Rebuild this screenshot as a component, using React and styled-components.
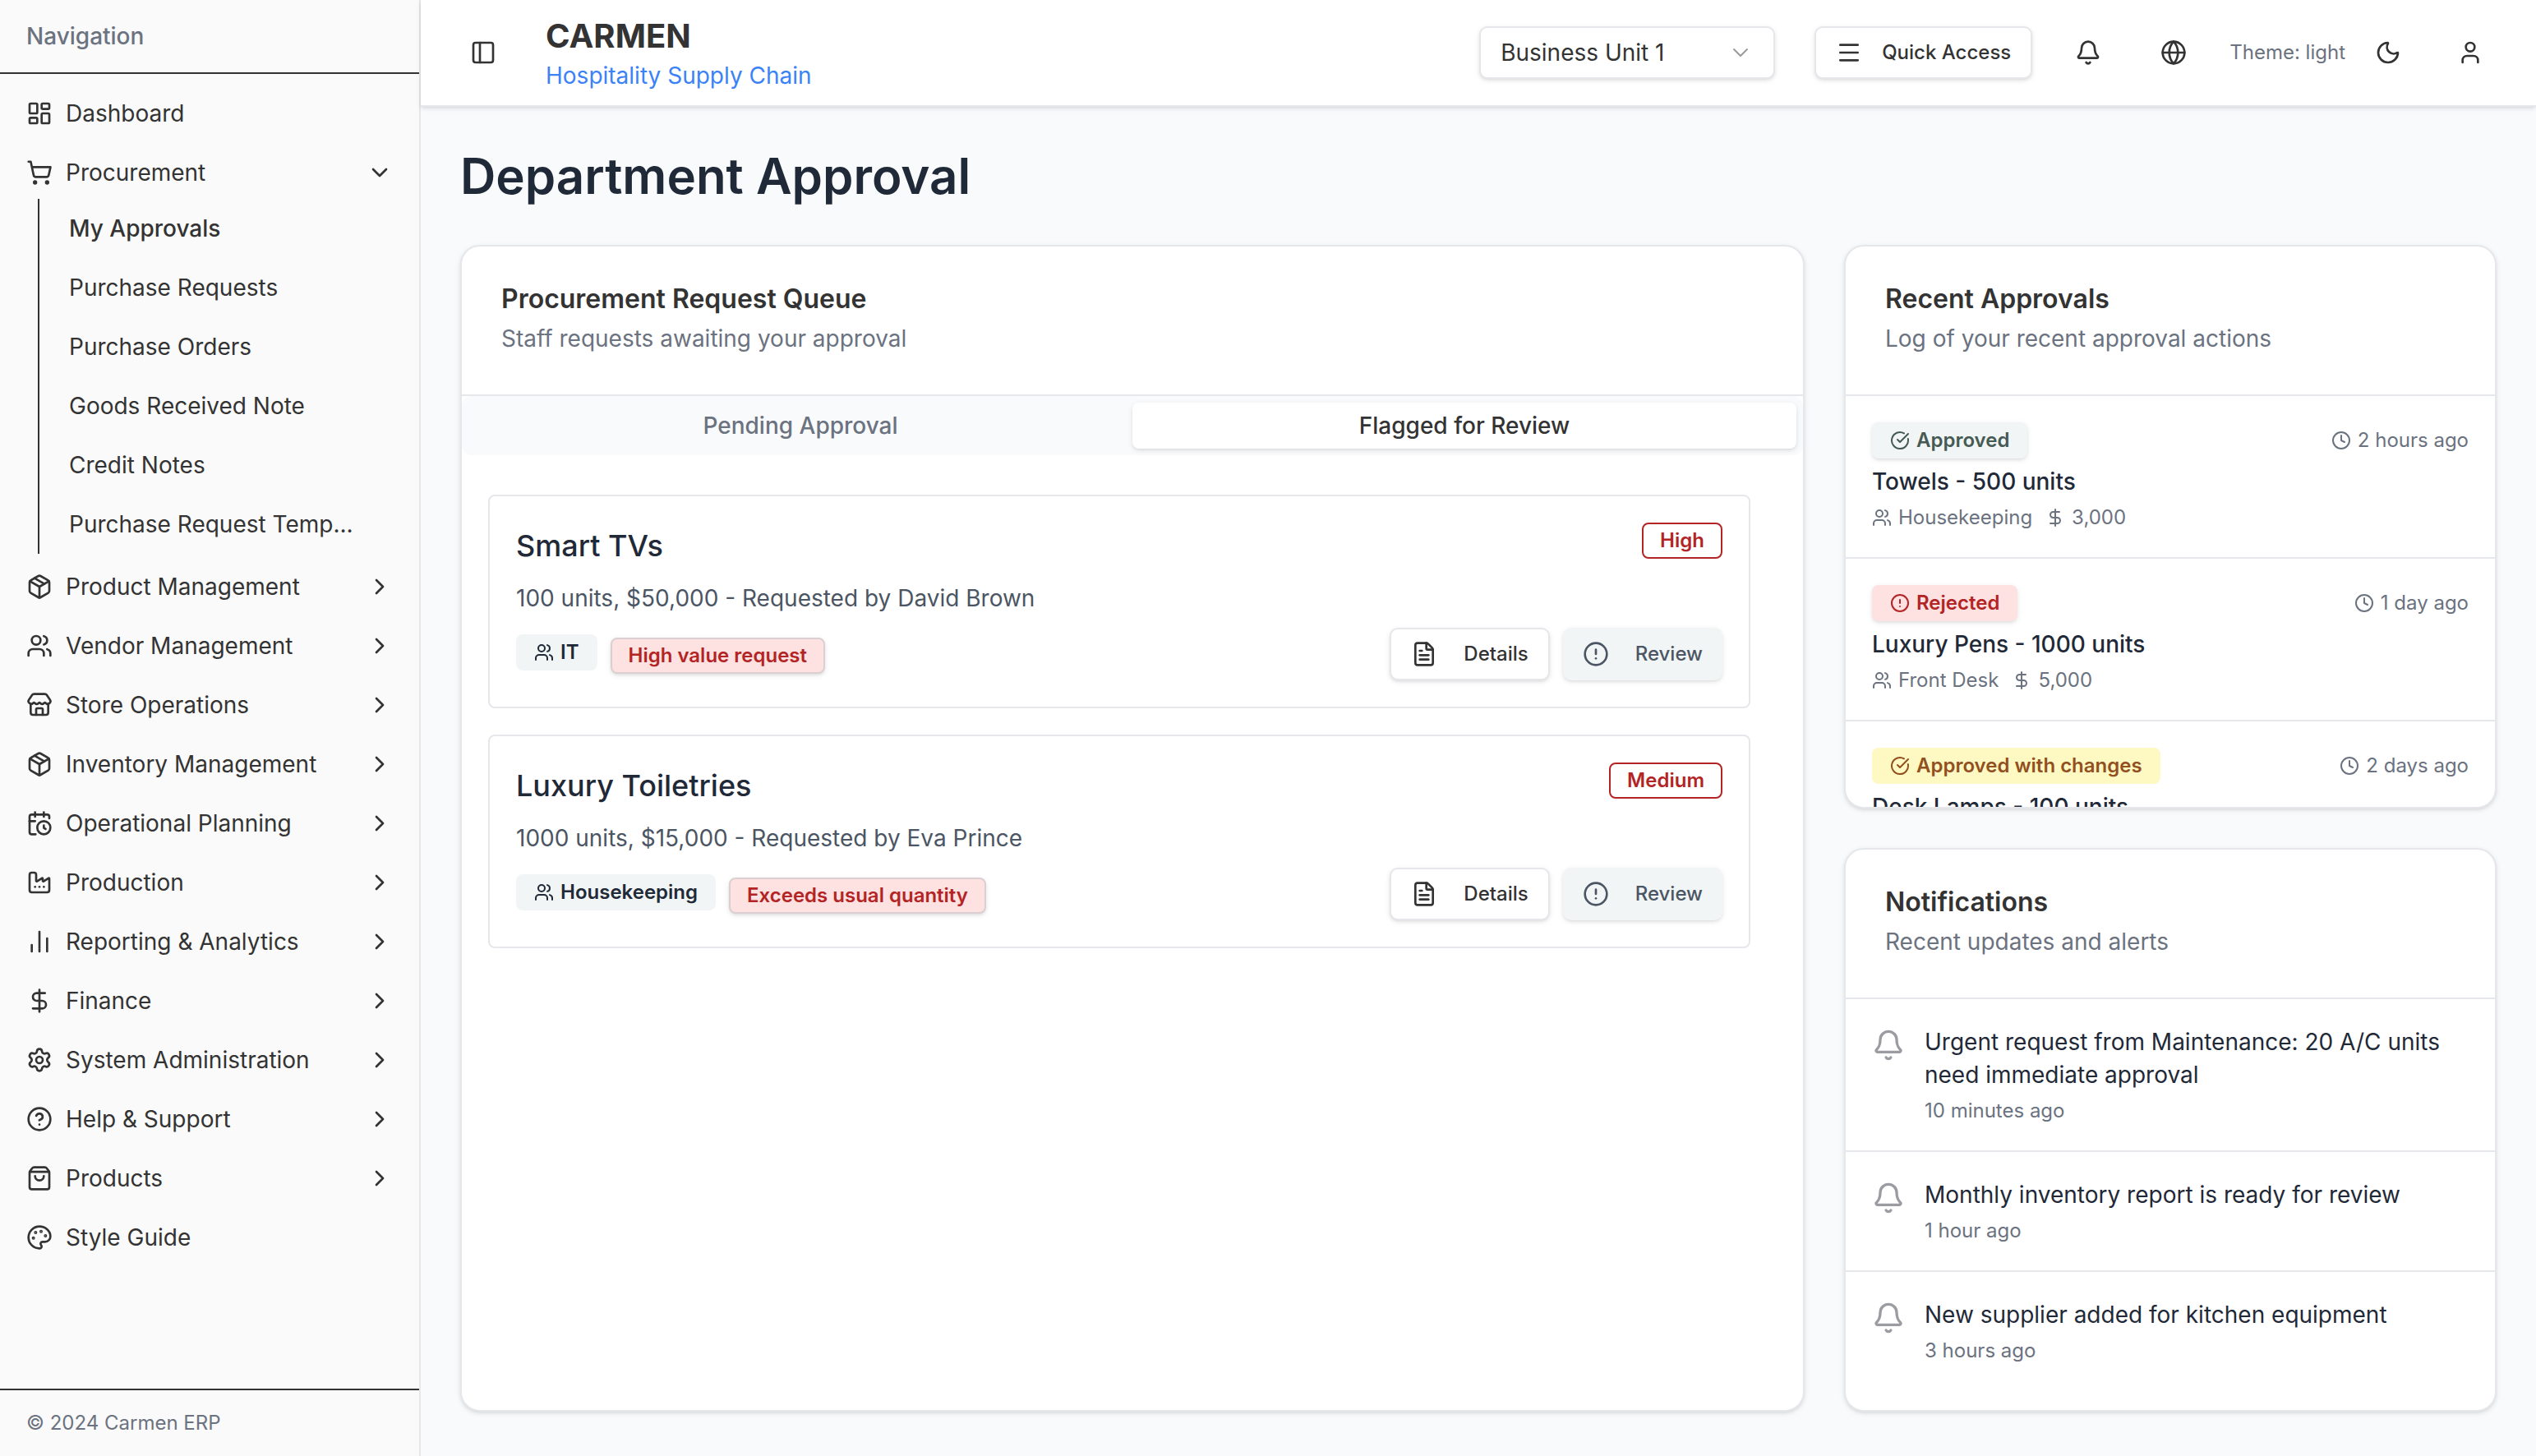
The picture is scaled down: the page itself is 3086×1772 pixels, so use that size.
import React from "react";
import styled, { createGlobalStyle, css } from "styled-components";
import {
  LayoutDashboard, ShoppingCart, Package, Users, Store, CalendarClock, Factory,
  ChartNoAxesColumn, DollarSign, Settings, CircleQuestionMark, ShoppingBag, Palette,
  ChevronDown, ChevronRight, PanelLeft, Menu, Bell, Globe, Moon, User,
  FileText, CircleAlert, CircleCheckBig, Clock,
} from "lucide-react";

const GlobalStyle = createGlobalStyle`
  *, *::before, *::after { box-sizing: border-box; }
  body {
    margin: 0;
    font-family: Inter, "Liberation Sans", sans-serif;
    font-optical-sizing: none;
    font-size: 28px;
    line-height: 40px;
    color: #333333;
    background: #f9fafc;
  }
  h1, h2, h3, p, ul { margin: 0; padding: 0; }
  ul { list-style: none; }
  a { color: inherit; text-decoration: none; }
  button, select { font: inherit; color: inherit; cursor: pointer; }
  svg { flex-shrink: 0; display: block; }
`;

const line = "#e5e7eb";
const muted = "#6b7280";
const softShadow = "0 2px 6px rgba(0, 0, 0, 0.1), 0 2px 4px -2px rgba(0, 0, 0, 0.1)";

const Shell = styled.div`
  display: flex;
  height: 100vh;
  min-height: 1600px;
`;

/* Sidebar */
const Sidebar = styled.aside`
  display: flex;
  flex-direction: column;
  flex: 0 0 512px;
  background: #fafafa;
  border-right: 2px solid ${line};
`;
const SidebarTitle = styled.div`
  padding: 24px 32px;
  border-bottom: 2px solid #333333;
  font-weight: 500;
  color: ${muted};
`;
const Nav = styled.nav`
  flex: 1;
  padding: 16px 0;
`;
const NavList = styled.ul`
  display: grid;
  gap: 8px;
`;
const navRow = css`
  display: flex;
  align-items: center;
  gap: 16px;
  width: 100%;
  height: 64px;
  padding: 0 32px;
`;
const NavLink = styled.a`
  ${navRow}
`;
const NavButton = styled.button`
  ${navRow}
  border: 0;
  background: none;
  text-align: left;
  span { flex: 1; }
`;
const SubList = styled.ul`
  margin-left: 46px;
  border-left: 2px solid #333333;
`;
const SubLink = styled.a`
  display: block;
  padding: 16px 36px;
  font-weight: ${(p) => (p.$active ? 500 : 400)};
  white-space: nowrap;
`;
const SidebarFooter = styled.footer`
  padding: 24px 32px;
  border-top: 2px solid #333333;
  font-size: 24px;
  line-height: 32px;
  color: ${muted};
`;

/* Top bar */
const Page = styled.div`
  display: flex;
  flex-direction: column;
  flex: 1;
  min-width: 0;
`;
const TopBar = styled.header`
  display: flex;
  align-items: center;
  gap: 48px;
  height: 130px;
  flex-shrink: 0;
  padding: 0 48px;
  background: #ffffff;
  border-bottom: 2px solid ${line};
  box-shadow: ${softShadow};
`;
const IconButton = styled.button`
  display: grid;
  place-items: center;
  width: ${(p) => p.$size || 72}px;
  height: ${(p) => p.$size || 72}px;
  padding: 0;
  border: 0;
  border-radius: 12px;
  background: none;
`;
const Brand = styled.a`
  flex: 1;
`;
const BrandName = styled.div`
  font-size: 40px;
  line-height: 56px;
  font-weight: 700;
`;
const BrandTag = styled.div`
  color: #3b82f6;
`;
const Tools = styled.div`
  display: flex;
  align-items: center;
  gap: 32px;
`;
const UnitPicker = styled.label`
  display: grid;
  align-items: center;
  width: 360px;
  margin-right: 16px;
  > * { grid-area: 1 / 1; }
  svg {
    justify-self: end;
    margin-right: 26px;
    opacity: 0.5;
    pointer-events: none;
  }
`;
const UnitSelect = styled.select`
  appearance: none;
  width: 100%;
  height: 64px;
  padding: 0 72px 0 24px;
  border: 2px solid ${line};
  border-radius: 10px;
  background: #ffffff;
  box-shadow: ${softShadow};
`;
const Button = styled.button`
  display: flex;
  align-items: center;
  gap: ${(p) => p.$gap || 32}px;
  height: 64px;
  padding: 0 24px;
  border: ${(p) => (p.$filled ? "0" : `2px solid ${line}`)};
  border-radius: 10px;
  background: ${(p) => (p.$filled ? "#f1f5f6" : "#ffffff")};
  color: ${(p) => (p.$filled ? "#4b5563" : "#333333")};
  box-shadow: ${softShadow};
  font-size: 24px;
  line-height: 32px;
  font-weight: 500;
`;
const ThemeToggle = styled.div`
  display: flex;
  align-items: center;
  gap: 16px;
  font-size: 24px;
  color: ${muted};
  button { color: #333333; }
`;

/* Main area */
const Main = styled.main`
  display: flex;
  flex-direction: column;
  flex: 1;
  min-height: 0;
  gap: 48px;
  padding: 48px 48px 54px;
`;
const PageTitle = styled.h1`
  font-size: 60px;
  line-height: 72px;
  font-weight: 600;
  color: #1f2937;
`;
const Board = styled.div`
  display: grid;
  grid-template-columns: repeat(3, minmax(0, 1fr));
  grid-template-rows: repeat(2, minmax(0, 1fr));
  gap: 48px;
  flex: 1;
  min-height: 0;
`;
const Card = styled.section`
  display: flex;
  flex-direction: column;
  overflow: hidden;
  border: 2px solid ${line};
  border-radius: 24px;
  background: #ffffff;
  box-shadow: ${softShadow};
  ${(p) => p.$wide && "grid-column: span 2; grid-row: span 2;"}
`;
const CardHeader = styled.header`
  display: grid;
  gap: 12px;
  flex-shrink: 0;
  padding: 48px;
  border-bottom: 2px solid ${line};
`;
const CardTitle = styled.h2`
  font-size: 32px;
  line-height: 32px;
  font-weight: 600;
  font-optical-sizing: auto;
`;
const CardNote = styled.p`
  color: ${muted};
`;

/* Queue */
const Tabs = styled.div`
  display: grid;
  grid-template-columns: 1fr 1fr;
  padding: 8px;
  border-radius: 12px;
  background: #f9fafc;
`;
const Tab = styled.button`
  height: 56px;
  padding: 0;
  border: 0;
  border-radius: 8px;
  font-weight: 500;
  background: ${(p) => (p.$active ? "#ffffff" : "none")};
  color: ${(p) => (p.$active ? "#333333" : muted)};
  box-shadow: ${(p) => (p.$active ? softShadow : "none")};
`;
const RequestList = styled.ul`
  display: grid;
  gap: 32px;
  padding: 48px 64px 32px 32px;
`;
const Request = styled.li`
  display: grid;
  gap: 16px;
  padding: 32px;
  border: 2px solid ${line};
  border-radius: 8px;
`;
const Split = styled.div`
  display: flex;
  justify-content: space-between;
  align-items: ${(p) => p.$align || "center"};
`;
const RequestTitle = styled.h3`
  font-size: 36px;
  line-height: 56px;
  font-weight: 500;
  color: #1f2937;
`;
const RequestText = styled.p`
  color: #4b5563;
`;
const Badges = styled.div`
  display: flex;
  gap: 16px;
  height: 48px;
`;
const tones = {
  plain: css`background: #f1f5f6; color: #1f2937;`,
  outline: css`border-color: #b32424; color: #b32424;`,
  flag: css`
    align-self: flex-end;
    background: #fee2e2;
    border-color: #dccfd2;
    color: #b32424;
    box-shadow: ${softShadow};
  `,
  approved: css`background: #f1f5f6; color: #465a54; box-shadow: ${softShadow};`,
  rejected: css`background: #fee2e2; color: #b32424; box-shadow: ${softShadow};`,
  changed: css`background: #fef9c3; color: #92501f;`,
};
const Badge = styled.span`
  display: inline-flex;
  align-items: center;
  gap: 8px;
  height: 44px;
  padding: 0 20px;
  border: 2px solid transparent;
  border-radius: 8px;
  font-size: 24px;
  line-height: 32px;
  font-weight: 600;
  ${(p) => tones[p.$tone]}
`;
const Actions = styled.div`
  display: flex;
  gap: 16px;
`;

/* Side cards */
const Entry = styled.li`
  display: grid;
  gap: 8px;
  padding: 32px;
  & + & { border-top: 2px solid ${line}; }
`;
const EntryTitle = styled.h3`
  font-size: 28px;
  line-height: 40px;
  font-weight: 500;
  color: #1f2937;
`;
const Meta = styled.div`
  display: flex;
  gap: 16px;
  font-size: 24px;
  line-height: 32px;
  color: ${muted};
  span {
    display: inline-flex;
    align-items: center;
    gap: 8px;
  }
`;
const Notice = styled.li`
  display: flex;
  gap: 24px;
  padding: 32px;
  & + & { border-top: 2px solid ${line}; }
  > svg {
    margin-top: 4px;
    color: #9b9ca1;
  }
`;
const NoticeBody = styled.div`
  display: grid;
  gap: 8px;
  color: #1f2937;
`;

const subItems = [
  "My Approvals", "Purchase Requests", "Purchase Orders",
  "Goods Received Note", "Credit Notes", "Purchase Request Temp...",
];
const sections = [
  ["Product Management", Package],
  ["Vendor Management", Users],
  ["Store Operations", Store],
  ["Inventory Management", Package],
  ["Operational Planning", CalendarClock],
  ["Production", Factory],
  ["Reporting & Analytics", ChartNoAxesColumn],
  ["Finance", DollarSign],
  ["System Administration", Settings],
  ["Help & Support", CircleQuestionMark],
  ["Products", ShoppingBag],
];
const requests = [
  { title: "Smart TVs", text: "100 units, $50,000 - Requested by David Brown", dept: "IT", flag: "High value request", level: "High" },
  { title: "Luxury Toiletries", text: "1000 units, $15,000 - Requested by Eva Prince", dept: "Housekeeping", flag: "Exceeds usual quantity", level: "Medium" },
];
const approvals = [
  { tone: "approved", status: "Approved", Icon: CircleCheckBig, when: "2 hours ago", title: "Towels - 500 units", dept: "Housekeeping", cost: "3,000" },
  { tone: "rejected", status: "Rejected", Icon: CircleAlert, when: "1 day ago", title: "Luxury Pens - 1000 units", dept: "Front Desk", cost: "5,000" },
  { tone: "changed", status: "Approved with changes", Icon: CircleCheckBig, when: "2 days ago", title: "Desk Lamps - 100 units" },
];
const notices = [
  ["Urgent request from Maintenance: 20 A/C units need immediate approval", "10 minutes ago"],
  ["Monthly inventory report is ready for review", "1 hour ago"],
  ["New supplier added for kitchen equipment", "3 hours ago"],
];

export default function App() {
  return (
    <Shell>
      <GlobalStyle />
      <Sidebar>
        <SidebarTitle>Navigation</SidebarTitle>
        <Nav aria-label="Main">
          <NavList>
            <li>
              <NavLink href="#dashboard"><LayoutDashboard size={32} />Dashboard</NavLink>
            </li>
            <li>
              <NavButton aria-expanded="true">
                <ShoppingCart size={32} /><span>Procurement</span><ChevronDown size={32} />
              </NavButton>
              <SubList>
                {subItems.map((name, i) => (
                  <li key={name}><SubLink href="#procurement" $active={i === 0}>{name}</SubLink></li>
                ))}
              </SubList>
            </li>
            {sections.map(([name, Icon]) => (
              <li key={name}>
                <NavButton aria-expanded="false">
                  <Icon size={32} /><span>{name}</span><ChevronRight size={32} />
                </NavButton>
              </li>
            ))}
            <li>
              <NavLink href="#style"><Palette size={32} />Style Guide</NavLink>
            </li>
          </NavList>
        </Nav>
        <SidebarFooter>© 2024 Carmen ERP</SidebarFooter>
      </Sidebar>

      <Page>
        <TopBar>
          <IconButton $size={56} aria-label="Toggle sidebar"><PanelLeft size={32} /></IconButton>
          <Brand href="#home">
            <BrandName>CARMEN</BrandName>
            <BrandTag>Hospitality Supply Chain</BrandTag>
          </Brand>
          <Tools>
            <UnitPicker>
              <UnitSelect aria-label="Business unit" defaultValue="1">
                <option value="1">Business Unit 1</option>
              </UnitSelect>
              <ChevronDown size={32} strokeWidth={1.4} />
            </UnitPicker>
            <Button $gap={24}><Menu size={32} />Quick Access</Button>
            <IconButton aria-label="Notifications"><Bell size={32} /></IconButton>
            <IconButton aria-label="Language"><Globe size={32} /></IconButton>
            <ThemeToggle>
              Theme: light
              <IconButton aria-label="Switch theme"><Moon size={32} /></IconButton>
            </ThemeToggle>
            <IconButton $size={64} aria-label="Account"><User size={32} /></IconButton>
          </Tools>
        </TopBar>

        <Main>
          <PageTitle>Department Approval</PageTitle>
          <Board>
            <Card $wide>
              <CardHeader>
                <CardTitle>Procurement Request Queue</CardTitle>
                <CardNote>Staff requests awaiting your approval</CardNote>
              </CardHeader>
              <Tabs role="tablist">
                <Tab role="tab" aria-selected="false">Pending Approval</Tab>
                <Tab role="tab" aria-selected="true" $active>Flagged for Review</Tab>
              </Tabs>
              <RequestList>
                {requests.map((r) => (
                  <Request key={r.title}>
                    <Split $align="flex-start">
                      <RequestTitle>{r.title}</RequestTitle>
                      <Badge $tone="outline">{r.level}</Badge>
                    </Split>
                    <RequestText>{r.text}</RequestText>
                    <Split>
                      <Badges>
                        <Badge $tone="plain"><Users size={24} />{r.dept}</Badge>
                        <Badge $tone="flag">{r.flag}</Badge>
                      </Badges>
                      <Actions>
                        <Button><FileText size={32} />Details</Button>
                        <Button $filled><CircleAlert size={32} />Review</Button>
                      </Actions>
                    </Split>
                  </Request>
                ))}
              </RequestList>
            </Card>

            <Card>
              <CardHeader>
                <CardTitle>Recent Approvals</CardTitle>
                <CardNote>Log of your recent approval actions</CardNote>
              </CardHeader>
              <ul>
                {approvals.map((a) => (
                  <Entry key={a.title}>
                    <Split>
                      <Badge $tone={a.tone}><a.Icon size={24} />{a.status}</Badge>
                      <Meta><span><Clock size={24} />{a.when}</span></Meta>
                    </Split>
                    <EntryTitle>{a.title}</EntryTitle>
                    {a.dept && (
                      <Meta>
                        <span><Users size={24} />{a.dept}</span>
                        <span><DollarSign size={24} />{a.cost}</span>
                      </Meta>
                    )}
                  </Entry>
                ))}
              </ul>
            </Card>

            <Card>
              <CardHeader>
                <CardTitle>Notifications</CardTitle>
                <CardNote>Recent updates and alerts</CardNote>
              </CardHeader>
              <ul>
                {notices.map(([text, when]) => (
                  <Notice key={text}>
                    <Bell size={40} />
                    <NoticeBody>
                      <p>{text}</p>
                      <Meta>{when}</Meta>
                    </NoticeBody>
                  </Notice>
                ))}
              </ul>
            </Card>
          </Board>
        </Main>
      </Page>
    </Shell>
  );
}
